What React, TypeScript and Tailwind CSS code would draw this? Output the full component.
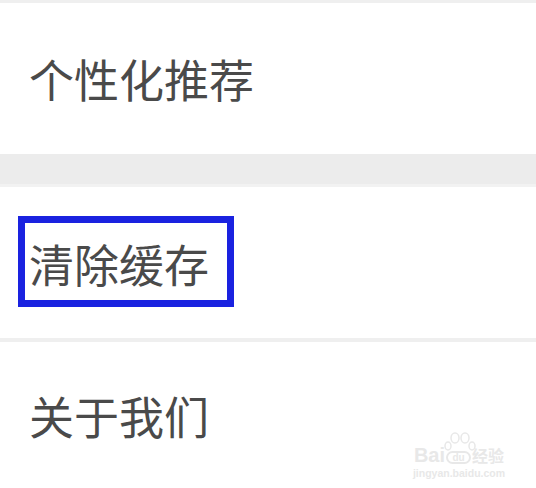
const cjk = { fontFamily: '"Noto Sans CJK SC", sans-serif' };

export default function App() {
  return (
    <div className="relative h-[488px] w-[536px] overflow-hidden bg-white text-[#4a4a4a]" style={cjk}>
      <div className="h-[3px] bg-[#efefef]" />
      <div className="flex h-[151px] items-center pl-[29px] text-[45px] leading-none">个性化推荐</div>
      <div className="h-[33px] border-b-[3px] border-[#f2f2f2] bg-[#ececec]" />
      <div className="flex h-[151px] items-center pb-[2px] pl-[18px]">
        <div className="flex h-[91px] w-[216px] items-center border-[7px] border-[#1a22e0] bg-white pl-[4px] pt-[4px] text-[45px] leading-none">
          清除缓存
        </div>
      </div>
      <div className="h-[4px] bg-[#efefef]" />
      <div className="flex h-[146px] items-center pl-[29px] text-[45px] leading-none">关于我们</div>

      {/* watermark */}
      <div className="absolute left-[412px] top-[445px] flex w-[94px] flex-col items-center text-[#e8e8e8]">
        <div className="flex items-center">
          <span className="font-['Liberation_Sans'] text-[20px] font-bold leading-none">Bai</span>
          <div className="relative ml-[1px] mt-[5px] flex h-[13px] w-[25px] items-center justify-center rounded-full border-2 border-[#e8e8e8] font-['Liberation_Sans'] text-[10px] font-bold leading-none">
            du
            <svg className="absolute -top-[21px] left-[-4px]" width="32" height="20" viewBox="0 0 32 20" fill="none" stroke="#e8e8e8" strokeWidth="1.5">
              <ellipse cx="4" cy="14" rx="3" ry="4" />
              <ellipse cx="11" cy="6" rx="4" ry="5" />
              <ellipse cx="21" cy="6" rx="4" ry="5" />
              <ellipse cx="28" cy="14" rx="3" ry="4" />
            </svg>
          </div>
          <span className="ml-[1px] text-[16px] font-bold leading-none">经验</span>
        </div>
        <span className="mt-[3px] font-['Liberation_Sans'] text-[10.5px] font-bold leading-none">jingyan.baidu.com</span>
      </div>
    </div>
  );
}
